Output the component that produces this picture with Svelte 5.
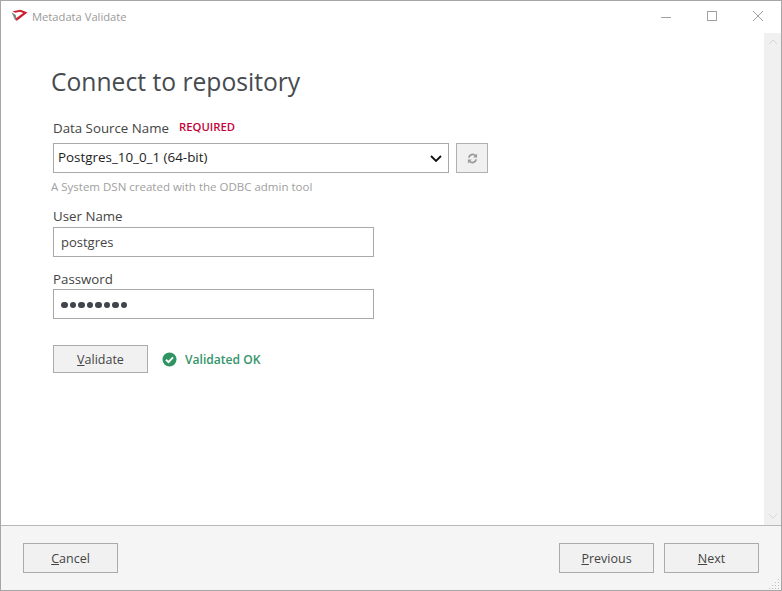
<script>
  let dsn = 'Postgres_10_0_1 (64-bit)'
  let user = 'postgres'
</script>

<div class="window">
  <header class="titlebar">
    <svg class="logo" width="17" height="13" viewBox="0 0 16 12">
      <path d="M0.5 3 L3.5 9.5 L5.5 11.5 L4.5 5.5 Z" fill="#7f858a" />
      <path d="M1.5 2 L9 0.5 L15.5 3.2 L5.5 11 L4.4 8.8 L11.5 3.6 L8.5 2.4 L4 3.4 Z" fill="#cf1f2e" />
    </svg>
    <span class="title">Metadata Validate</span>
    <div class="controls">
      <svg width="12" height="12" viewBox="0 0 12 12"><path d="M1 7.5H11" stroke="#a0a0a0" /></svg>
      <svg width="12" height="12" viewBox="0 0 12 12"><rect x="1.5" y="1.5" width="9" height="9" fill="none" stroke="#a0a0a0" /></svg>
      <svg width="12" height="12" viewBox="0 0 12 12"><path d="M1 1L11 11M11 1L1 11" stroke="#a0a0a0" /></svg>
    </div>
  </header>

  <div class="middle">
    <main class="content">
      <h1>Connect to repository</h1>

      <div class="label-row">
        <span class="label">Data Source Name</span>
        <span class="required">REQUIRED</span>
      </div>
      <div class="dsn-row">
        <div class="select">
          <span class="selected">{dsn}</span>
          <svg width="12" height="7" viewBox="0 0 12 7"><path d="M1 1L6 6L11 1" fill="none" stroke="#111" stroke-width="1.8" /></svg>
        </div>
        <button class="refresh" aria-label="Refresh">
          <svg width="11" height="11" viewBox="0 0 12 12">
            <path d="M2 5A4.2 4.2 0 0 1 9.3 3" fill="none" stroke="#999" stroke-width="2" />
            <path d="M10 7A4.2 4.2 0 0 1 2.7 9" fill="none" stroke="#999" stroke-width="2" />
            <path d="M11 0.5V5H6.8Z M1 11.5V7H5.2Z" fill="#999" />
          </svg>
        </button>
      </div>
      <p class="hint">A System DSN created with the ODBC admin tool</p>

      <label class="label user" for="user">User Name</label>
      <input id="user" class="field" bind:value={user} />

      <label class="label pass" for="pass">Password</label>
      <div id="pass" class="field dots">
        {#each Array(8) as _}<i></i>{/each}
      </div>

      <div class="validate-row">
        <button class="btn"><u>V</u>alidate</button>
        <svg width="15" height="15" viewBox="0 0 15 15">
          <circle cx="7.5" cy="7.5" r="7" fill="#2f9462" />
          <path d="M4 7.8L6.5 10.2L11 5.4" fill="none" stroke="#fff" stroke-width="2" />
        </svg>
        <span class="ok">Validated OK</span>
      </div>
    </main>

    <aside class="scrollbar">
      <svg width="10" height="6" viewBox="0 0 10 6"><path d="M1 5L5 1L9 5" fill="none" stroke="#d6d6d6" /></svg>
      <svg width="10" height="6" viewBox="0 0 10 6"><path d="M1 1L5 5L9 1" fill="none" stroke="#d6d6d6" /></svg>
    </aside>
  </div>

  <footer class="footer">
    <button class="btn tall"><u>C</u>ancel</button>
    <div class="spacer"></div>
    <button class="btn tall"><u>P</u>revious</button>
    <button class="btn tall"><u>N</u>ext</button>
    <svg class="grip" width="11" height="11" viewBox="0 0 11 11">
      <path d="M9 1h1v1H9zM6 4h1v1H6zM9 4h1v1H9zM3 7h1v1H3zM6 7h1v1H6zM9 7h1v1H9zM0 10h1v1H0zM3 10h1v1H3zM6 10h1v1H6zM9 10h1v1H9z" fill="#bdbdbd" />
    </svg>
  </footer>
</div>

<style>
  :global(body) {
    margin: 0;
    background: #fff;
  }
  .window {
    box-sizing: border-box;
    width: 782px;
    height: 591px;
    border: 1px solid #a6a6a6;
    display: flex;
    flex-direction: column;
    font-family: "Open Sans", "Noto Sans", sans-serif;
    font-size: 13px;
    color: #444;
    background: #fff;
  }
  .titlebar {
    height: 32px;
    display: flex;
    align-items: center;
    padding-left: 10px;
    flex: none;
  }
  .logo {
    margin-right: 4px;
    margin-top: -3px;
  }
  .title {
    font-size: 11.2px;
    color: #9a9a9a;
    margin-top: -1px;
  }
  .controls {
    margin-left: auto;
    display: flex;
    gap: 34px;
    padding-right: 17px;
    margin-top: -3px;
  }
  .middle {
    flex: 1;
    display: flex;
    min-height: 0;
  }
  .content {
    flex: 1;
    padding: 0 0 0 52px;
  }
  h1 {
    margin: 0 0 0 -2px;
    padding-top: 31px;
    font-size: 24.65px;
    font-weight: 400;
    line-height: 36px;
    color: #464b50;
  }
  .label-row {
    margin-top: 18px;
    display: flex;
    align-items: center;
    gap: 10px;
    height: 20px;
  }
  .label {
    display: block;
    font-size: 13.3px;
    line-height: 18px;
    color: #444;
  }
  .required {
    font-size: 11.3px;
    font-weight: 600;
    color: #c4003a;
    margin-top: -3px;
  }
  .dsn-row {
    display: flex;
    gap: 7px;
    margin-top: 5px;
  }
  .select {
    box-sizing: border-box;
    width: 396px;
    height: 30px;
    border: 1px solid #a9a9a9;
    display: flex;
    align-items: center;
    justify-content: space-between;
    padding: 0 6px 0 4px;
    font-size: 13.4px;
    color: #222;
  }
  .selected {
    margin-top: -3px;
  }
  .refresh {
    box-sizing: border-box;
    width: 32px;
    height: 30px;
    border: 1px solid #b0b0b0;
    background: #f0f0f0;
    padding: 0;
    display: flex;
    align-items: center;
    justify-content: center;
  }
  .hint {
    margin: 6px 0 0 -2px;
    font-size: 11.5px;
    line-height: 16px;
    color: #a0a0a0;
  }
  .user {
    margin-top: 12px;
  }
  .pass {
    margin-top: 13px;
  }
  .field {
    box-sizing: border-box;
    display: block;
    width: 321px;
    height: 30px;
    margin-top: 2px;
    border: 1px solid #a9a9a9;
    padding: 0 7px;
    font: inherit;
    font-size: 13px;
    color: #444;
    background: #fff;
    outline: none;
  }
  .dots {
    display: flex;
    align-items: center;
    gap: 2px;
    margin-top: 1px;
    padding-top: 2px;
  }
  .dots i {
    width: 6.5px;
    height: 6.5px;
    border-radius: 50%;
    background: #3f454c;
  }
  .validate-row {
    display: flex;
    align-items: center;
    margin-top: 26px;
  }
  .validate-row svg {
    margin-left: 14px;
    margin-right: 8px;
  }
  .ok {
    font-size: 12.1px;
    font-weight: 600;
    color: #35946a;
  }
  .btn {
    box-sizing: border-box;
    width: 95px;
    height: 28px;
    border: 1px solid #ababab;
    background: #f1f1f1;
    padding: 0;
    font: inherit;
    font-size: 12.5px;
    color: #444;
  }
  .btn.tall {
    height: 30px;
  }
  .scrollbar {
    width: 17px;
    background: #f0f0f0;
    display: flex;
    flex-direction: column;
    justify-content: space-between;
    align-items: center;
    padding: 6px 0;
    box-sizing: border-box;
  }
  .footer {
    position: relative;
    flex: none;
    box-sizing: border-box;
    height: 65px;
    border-top: 1px solid #b8b8b8;
    background: #f5f5f5;
    display: flex;
    align-items: flex-start;
    gap: 10px;
    padding: 17px 22px 0;
  }
  .spacer {
    flex: 1;
  }
  .grip {
    position: absolute;
    right: 1px;
    bottom: 1px;
  }
</style>
